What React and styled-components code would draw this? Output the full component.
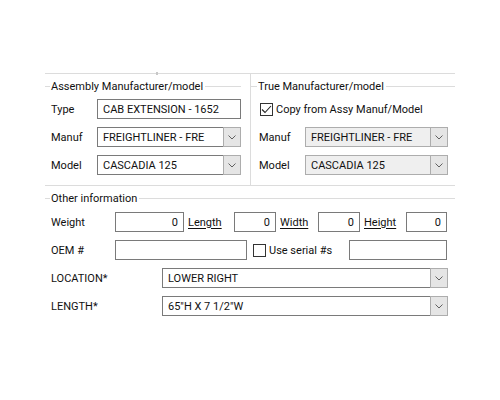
import React from "react";
import styled, { createGlobalStyle } from "styled-components";

const GlobalStyle = createGlobalStyle`
  body {
    margin: 0;
    background: #fff;
    font-family: Roboto, "Liberation Sans", Arial, sans-serif;
    font-size: 11px;
    color: #111;
  }
`;

const Frame = styled.div`
  margin: 73px 0 0 45px;
  width: 410px;
  border-top: 1px solid #dcdcdc;
  position: relative;
`;

// the little notch on the frame's top edge
const Notch = styled.span`
  position: absolute;
  left: 111px;
  top: -2px;
  width: 2px;
  height: 3px;
  background: #c8c8c8;
`;

const UpperRow = styled.div`
  display: flex;
  height: 111px;
  border-bottom: 1px solid #dcdcdc;
`;

const Group = styled.div`
  box-sizing: border-box;
  width: ${(p) => p.$width || "auto"};
  flex: ${(p) => (p.$width ? "none" : 1)};
  padding: 5px ${(p) => p.$padRight || 0}px 0 0;
  border-left: ${(p) => (p.$divider ? "1px solid #dcdcdc" : "none")};
  display: flex;
  flex-direction: column;
`;

const GroupHeader = styled.div`
  display: flex;
  align-items: center;
  height: 14px;
  &::before {
    content: "";
    width: ${(p) => p.$dash || 5}px;
    border-top: 1px solid #dcdcdc;
  }
  &::after {
    content: "";
    flex: 1;
    border-top: 1px solid #dcdcdc;
  }
`;

const Caption = styled.span`
  padding: 0 2px 0 1px;
  white-space: nowrap;
`;

const Rows = styled.div`
  display: flex;
  flex-direction: column;
  gap: ${(p) => p.$gap || 8}px;
  margin-top: ${(p) => p.$top || 6}px;
  padding-left: ${(p) => p.$left || 6}px;
`;

const Row = styled.div`
  display: flex;
  align-items: center;
  height: ${(p) => p.$h || 20}px;
`;

const Label = styled.span`
  flex: none;
  width: ${(p) => p.$w}px;
  white-space: nowrap;
`;

const LinkLabel = styled.span`
  flex: none;
  box-sizing: border-box;
  width: ${(p) => p.$w}px;
  padding-left: 4px;
  text-decoration: underline;
  text-underline-offset: 2px;
`;

const TextBox = styled.div`
  flex: none;
  box-sizing: border-box;
  width: ${(p) => p.$w}px;
  height: 20px;
  border: 1px solid #7a7a7a;
  background: #fff;
  padding: 0 5px;
  display: flex;
  align-items: center;
  justify-content: ${(p) => (p.$right ? "flex-end" : "flex-start")};
  white-space: nowrap;
`;

const Combo = styled.div`
  flex: none;
  box-sizing: border-box;
  width: ${(p) => p.$w}px;
  height: 20px;
  display: flex;
  border: 1px solid ${(p) => (p.$disabled ? "#adadad" : "#7a7a7a")};
  background: ${(p) => (p.$disabled ? "#efefef" : "#fff")};
`;

const ComboText = styled.div`
  flex: 1;
  padding-left: 5px;
  display: flex;
  align-items: center;
  white-space: nowrap;
  overflow: hidden;
`;

const ComboButton = styled.div`
  flex: none;
  width: 16px;
  margin: -1px -1px -1px 0;
  border: 1px solid #adadad;
  background: #e5e5e5;
  display: flex;
  align-items: center;
  justify-content: center;
`;

const CheckLabel = styled.label`
  flex: none;
  width: ${(p) => (p.$w ? `${p.$w}px` : "auto")};
  display: flex;
  align-items: center;
  gap: 3px;
  white-space: nowrap;
`;

const Box = styled.span`
  flex: none;
  box-sizing: border-box;
  width: 13px;
  height: 13px;
  border: 1px solid #333;
  background: #fff;
  display: flex;
  align-items: center;
  justify-content: center;
`;

const Spacer = styled.span`
  flex: none;
  width: ${(p) => p.$w}px;
`;

const Chevron = () => (
  <svg width="8" height="5" viewBox="0 0 8 5">
    <polyline points="0.5,0.5 4,4 7.5,0.5" fill="none" stroke="#606060" strokeWidth="1" />
  </svg>
);

const DropDown = ({ w, value, disabled }) => (
  <Combo $w={w} $disabled={disabled}>
    <ComboText>{value}</ComboText>
    <ComboButton>
      <Chevron />
    </ComboButton>
  </Combo>
);

const CheckBox = ({ checked, label, w }) => (
  <CheckLabel $w={w}>
    <Box>
      {checked && (
        <svg width="11" height="9" viewBox="0 0 11 9">
          <polyline points="1,4.5 4,7.5 10,1" fill="none" stroke="#222" strokeWidth="1.1" />
        </svg>
      )}
    </Box>
    {label}
  </CheckLabel>
);

export default function App() {
  return (
    <>
      <GlobalStyle />
      <Frame>
        <Notch />
        <UpperRow>
          <Group $width="205px" $padRight={9}>
            <GroupHeader>
              <Caption>Assembly Manufacturer/model</Caption>
            </GroupHeader>
            <Rows>
              <Row>
                <Label $w={46}>Type</Label>
                <TextBox $w={144}>CAB EXTENSION - 1652</TextBox>
              </Row>
              <Row>
                <Label $w={46}>Manuf</Label>
                <DropDown w={144} value="FREIGHTLINER - FRE" />
              </Row>
              <Row>
                <Label $w={46}>Model</Label>
                <DropDown w={144} value="CASCADIA 125" />
              </Row>
            </Rows>
          </Group>
          <Group $divider>
            <GroupHeader $dash={6}>
              <Caption>True Manufacturer/model</Caption>
            </GroupHeader>
            <Rows $left={8}>
              <Row>
                <Spacer $w={1} />
                <CheckBox checked label="Copy from Assy Manuf/Model" />
              </Row>
              <Row>
                <Label $w={46}>Manuf</Label>
                <DropDown w={143} value="FREIGHTLINER - FRE" disabled />
              </Row>
              <Row>
                <Label $w={46}>Model</Label>
                <DropDown w={143} value="CASCADIA 125" disabled />
              </Row>
            </Rows>
          </Group>
        </UpperRow>

        <Group>
          <GroupHeader $dash={5}>
            <Caption>Other information</Caption>
          </GroupHeader>
          <Rows $top={7}>
            <Row>
              <Label $w={64}>Weight</Label>
              <TextBox $w={69} $right>0</TextBox>
              <LinkLabel $w={50}>Length</LinkLabel>
              <TextBox $w={42} $right>0</TextBox>
              <LinkLabel $w={42}>Width</LinkLabel>
              <TextBox $w={42} $right>0</TextBox>
              <LinkLabel $w={46}>Height</LinkLabel>
              <TextBox $w={41} $right>0</TextBox>
            </Row>
            <Row>
              <Label $w={64}>OEM #</Label>
              <TextBox $w={132} />
              <Spacer $w={6} />
              <CheckBox label="Use serial #s" w={96} />
              <TextBox $w={98} />
            </Row>
            <Row>
              <Label $w={111}>LOCATION*</Label>
              <DropDown w={286} value="LOWER RIGHT" />
            </Row>
            <Row>
              <Label $w={111}>LENGTH*</Label>
              <DropDown w={286} value={"65\"H X 7 1/2\"W"} />
            </Row>
          </Rows>
        </Group>
      </Frame>
    </>
  );
}
